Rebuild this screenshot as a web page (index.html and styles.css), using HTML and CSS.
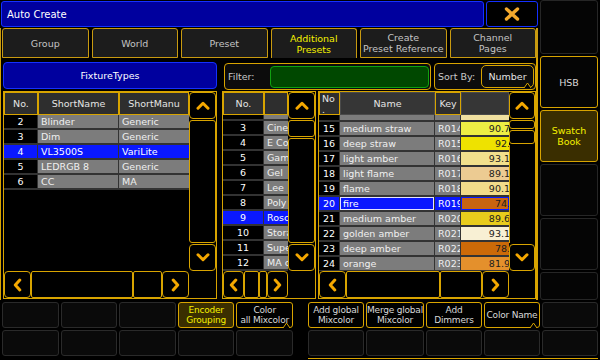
FILE: index.html
```html
<!DOCTYPE html>
<html>
<head>
<meta charset="utf-8">
<link rel="stylesheet" href="styles.css">
</head>
<body>
<div class="app">
  <div class="titlebar">
    <div class="title">Auto Create</div>
    <div class="close"><svg width="16" height="14" viewBox="0 0 16 14"><path d="M2.5 2 L13.5 12 M13.5 2 L2.5 12" stroke="#f4a92c" stroke-width="3.4" stroke-linecap="round"/></svg></div>
  </div>

  <div class="sidebar">
    <div class="scell top"></div>
    <div class="scell btn">HSB</div>
    <div class="scell btn on">Swatch<br>Book</div>
    <div class="scell"></div>
    <div class="scell"></div>
    <div class="scell last"></div>
  </div>

  <div class="tabs">
    <div class="tab">Group</div>
    <div class="tab">World</div>
    <div class="tab">Preset</div>
    <div class="tab act">Additional<br>Presets</div>
    <div class="tab">Create<br>Preset Reference</div>
    <div class="tab">Channel<br>Pages</div>
  </div>

  <div class="content">
    <div class="ftheader">FixtureTypes</div>
    <div class="filterrow">
      <div class="filter"><span>Filter:</span><div class="green"></div></div>
      <div class="sort"><span>Sort By:</span><div class="numbtn">Number<svg class="notch" width="7" height="6" viewBox="0 0 7 6"><path d="M0 6 L3.5 1 L7 6" fill="#000" stroke="#d8a400" stroke-width="1"/></svg></div></div>
    </div>

    <div class="panel pleft">
      <div class="tbl tl">
        <div class="thead"><div class="th">No.</div><div class="th">ShortName</div><div class="th">ShortManu</div></div>
        <div class="rows">
          <div class="tr"><div class="no">2</div><div>Blinder</div><div>Generic</div></div>
          <div class="tr"><div class="no">3</div><div>Dim</div><div>Generic</div></div>
          <div class="tr sel"><div class="no">4</div><div>VL3500S</div><div>VariLite</div></div>
          <div class="tr"><div class="no">5</div><div>LEDRGB 8</div><div>Generic</div></div>
          <div class="tr"><div class="no">6</div><div>CC</div><div>MA</div></div>
        </div>
      </div>
      <div class="vs">
        <div class="sb"><svg width="14" height="9" viewBox="0 0 14 9"><path d="M2 7.2 L7 2.3 L12 7.2" fill="none" stroke="#f5a800" stroke-width="3" stroke-linecap="round" stroke-linejoin="round"/></svg></div>
        <div class="trk"></div>
        <div class="sb"><svg width="14" height="9" viewBox="0 0 14 9"><path d="M2 1.8 L7 6.7 L12 1.8" fill="none" stroke="#f5a800" stroke-width="3" stroke-linecap="round" stroke-linejoin="round"/></svg></div>
      </div>
      <div class="hbar hl">
        <div class="ab"><svg width="9" height="14" viewBox="0 0 9 14"><path d="M6.8 2 L2.3 7 L6.8 12" fill="none" stroke="#f5a800" stroke-width="3" stroke-linecap="round" stroke-linejoin="round"/></svg></div>
        <div class="hs"></div>
        <div class="hs"></div>
        <div class="ab"><svg width="9" height="14" viewBox="0 0 9 14"><path d="M2.2 2 L6.7 7 L2.2 12" fill="none" stroke="#f5a800" stroke-width="3" stroke-linecap="round" stroke-linejoin="round"/></svg></div>
      </div>
      <div class="corner"></div>
    </div>

    <div class="panel pmid">
      <div class="tbl tm">
        <div class="thead"><div class="th">No.</div><div class="th"></div></div>
        <div class="rows off9">
          <div class="tr sliver"><div class="no"></div><div></div></div>
          <div class="tr"><div class="no">3</div><div>Cinegel</div></div>
          <div class="tr"><div class="no">4</div><div>E Colour</div></div>
          <div class="tr"><div class="no">5</div><div>GamColor</div></div>
          <div class="tr"><div class="no">6</div><div>Gel</div></div>
          <div class="tr"><div class="no">7</div><div>Lee</div></div>
          <div class="tr"><div class="no">8</div><div>Poly</div></div>
          <div class="tr sel"><div class="no">9</div><div>Rosco</div></div>
          <div class="tr"><div class="no">10</div><div>Storaro</div></div>
          <div class="tr"><div class="no">11</div><div>Supergel</div></div>
          <div class="tr"><div class="no">12</div><div>MA colors</div></div>
        </div>
      </div>
      <div class="vs">
        <div class="sb"><svg width="14" height="9" viewBox="0 0 14 9"><path d="M2 7.2 L7 2.3 L12 7.2" fill="none" stroke="#f5a800" stroke-width="3" stroke-linecap="round" stroke-linejoin="round"/></svg></div>
        <div class="seg s17"></div>
        <div class="trk"></div>
        <div class="sb"><svg width="14" height="9" viewBox="0 0 14 9"><path d="M2 1.8 L7 6.7 L12 1.8" fill="none" stroke="#f5a800" stroke-width="3" stroke-linecap="round" stroke-linejoin="round"/></svg></div>
      </div>
      <div class="hbar hm">
        <div class="ab"><svg width="9" height="14" viewBox="0 0 9 14"><path d="M6.8 2 L2.3 7 L6.8 12" fill="none" stroke="#f5a800" stroke-width="3" stroke-linecap="round" stroke-linejoin="round"/></svg></div>
        <div class="hs"></div>
        <div class="hs"></div>
        <div class="ab"><svg width="9" height="14" viewBox="0 0 9 14"><path d="M2.2 2 L6.7 7 L2.2 12" fill="none" stroke="#f5a800" stroke-width="3" stroke-linecap="round" stroke-linejoin="round"/></svg></div>
      </div>
      <div class="corner"></div>
    </div>

    <div class="panel pright">
      <div class="tbl tr4">
        <div class="thead"><div class="th no2">No<br>.</div><div class="th dk">Name</div><div class="th">Key</div><div class="th dk"></div></div>
        <div class="rows off8">
          <div class="tr sliver"><div class="no"></div><div></div><div></div><div class="col" style="background:#f0e0a0"></div></div>
          <div class="tr"><div class="no">15</div><div>medium straw</div><div>R014</div><div class="col" style="background:#eeee44"><span>90.7</span></div></div>
          <div class="tr"><div class="no">16</div><div>deep straw</div><div>R015</div><div class="col" style="background:#eee200"><span>92.</span></div></div>
          <div class="tr"><div class="no">17</div><div>light amber</div><div>R016</div><div class="col" style="background:#f2e08c"><span>93.1</span></div></div>
          <div class="tr"><div class="no">18</div><div>light flame</div><div>R017</div><div class="col" style="background:#eccb92"><span>89.1</span></div></div>
          <div class="tr"><div class="no">19</div><div>flame</div><div>R018</div><div class="col" style="background:#f2dc8a"><span>90.1</span></div></div>
          <div class="tr sel"><div class="no">20</div><div class="edit">fire</div><div>R019</div><div class="col" style="background:#c86410"><span>74.</span></div></div>
          <div class="tr"><div class="no">21</div><div>medium amber</div><div>R020</div><div class="col" style="background:#e8cc1c"><span>89.6</span></div></div>
          <div class="tr"><div class="no">22</div><div>golden amber</div><div>R021</div><div class="col" style="background:#f8f0d4"><span>93.1</span></div></div>
          <div class="tr"><div class="no">23</div><div>deep amber</div><div>R022</div><div class="col" style="background:#cc6a08"><span>78.</span></div></div>
          <div class="tr"><div class="no">24</div><div>orange</div><div>R023</div><div class="col" style="background:#e4902c"><span>81.9</span></div></div>
        </div>
      </div>
      <div class="vs">
        <div class="sb"><svg width="14" height="9" viewBox="0 0 14 9"><path d="M2 7.2 L7 2.3 L12 7.2" fill="none" stroke="#f5a800" stroke-width="3" stroke-linecap="round" stroke-linejoin="round"/></svg></div>
        <div class="seg s9"></div>
        <div class="seg s14"></div>
        <div class="fill"></div>
        <div class="sb"><svg width="14" height="9" viewBox="0 0 14 9"><path d="M2 1.8 L7 6.7 L12 1.8" fill="none" stroke="#f5a800" stroke-width="3" stroke-linecap="round" stroke-linejoin="round"/></svg></div>
      </div>
      <div class="hbar hr">
        <div class="ab"><svg width="9" height="14" viewBox="0 0 9 14"><path d="M6.8 2 L2.3 7 L6.8 12" fill="none" stroke="#f5a800" stroke-width="3" stroke-linecap="round" stroke-linejoin="round"/></svg></div>
        <div class="hs"></div>
        <div class="hs"></div>
        <div class="ab"><svg width="9" height="14" viewBox="0 0 9 14"><path d="M2.2 2 L6.7 7 L2.2 12" fill="none" stroke="#f5a800" stroke-width="3" stroke-linecap="round" stroke-linejoin="round"/></svg></div>
      </div>
      <div class="corner"></div>
    </div>
  </div>

  <div class="bottom">
    <div class="bg l">
      <div class="bb"></div>
      <div class="bb"></div>
      <div class="bb"></div>
      <div class="bb act on">Encoder<br>Grouping</div>
      <div class="bb act">Color<br>all Mixcolor<svg class="notch" width="7" height="6" viewBox="0 0 7 6"><path d="M0 6 L3.5 1 L7 6" fill="#000" stroke="#d8a400" stroke-width="1"/></svg></div>
      <div class="bb"></div>
      <div class="bb"></div>
      <div class="bb"></div>
      <div class="bb"></div>
      <div class="bb"></div>
    </div>
    <div class="bg r">
      <div class="bb act">Add global<br>Mixcolor</div>
      <div class="bb act">Merge global<br>Mixcolor</div>
      <div class="bb act">Add<br>Dimmers</div>
      <div class="bb act">Color Name<svg class="notch" width="7" height="6" viewBox="0 0 7 6"><path d="M0 6 L3.5 1 L7 6" fill="#000" stroke="#d8a400" stroke-width="1"/></svg></div>
      <div class="bb"></div>
      <div class="bb"></div>
      <div class="bb"></div>
      <div class="bb"></div>
      <div class="bb"></div>
      <div class="bb"></div>
    </div>
  </div>
</div>
</body>
</html>
```

FILE: styles.css
```css
* { box-sizing: border-box; margin: 0; padding: 0; }
html, body { width: 600px; height: 360px; overflow: hidden; background: #000; }
body { font-family: "DejaVu Sans", sans-serif; font-size: 9.5px; color: #d0d0d0; }

.app {
  display: grid;
  grid-template-columns: 538px 62px;
  grid-template-rows: 28px 30px 242px 60px;
  width: 600px;
  height: 360px;
}

/* title */
.titlebar { grid-column: 1; grid-row: 1; display: flex; gap: 2px; padding: 1px 0 1px 1px; }
.title {
  flex: 1; background: #00009e; border: 1px solid #1430ff; border-radius: 3px;
  color: #fff; font-size: 10px; display: flex; align-items: center; padding-left: 5px;
}
.close {
  width: 52px; background: #000; border: 1px solid #1430ff; border-radius: 3px;
  display: flex; align-items: center; justify-content: center;
}

/* sidebar */
.sidebar { grid-column: 2; grid-row: 1 / 4; display: flex; flex-direction: column; gap: 2px; padding: 0 2px; }
.scell {
  height: 52px; flex: none; background: #050505; border: 1px solid #262626; border-radius: 3px;
  display: flex; align-items: center; justify-content: center; text-align: center; line-height: 11px;
}
.scell.top { height: 54px; }
.scell.last { flex: 1; height: auto; }
.scell.btn { border-color: #d8a400; color: #d8d8d8; }
.scell.on { background: #3a2e00; color: #f4f000; }

/* tabs */
.tabs {
  grid-column: 1; grid-row: 2; display: grid; grid-template-columns: repeat(6, 1fr); gap: 3px;
  border-left: 1px solid #c89a10; border-right: 2px solid #c89a10; padding-left: 1px;
}
.tab {
  background: #1c1c1c; border: 1px solid #c89a10; border-radius: 3px 3px 0 0;
  display: flex; align-items: center; justify-content: center; text-align: center;
  line-height: 11px; color: #c4c4c4; white-space: nowrap;
}
.tab.act { color: #f4f000; border-bottom: none; }

/* content */
.content {
  grid-column: 1; grid-row: 3; display: grid;
  grid-template-columns: 214px 5px 94px 2px 218px;
  grid-template-rows: 28px 208px; row-gap: 1px;
  padding: 4px 0 1px 2px;
  border-left: 1px solid #d8a400; border-right: 2px solid #d8a400;
}
.ftheader {
  grid-column: 1; grid-row: 1; height: 27px; background: #00009e; border: 1px solid #1430ff; border-radius: 4px;
  color: #fff; display: flex; align-items: center; justify-content: center;
}
.filterrow { grid-column: 3 / 6; grid-row: 1; display: flex; gap: 3px; padding: 1px 0 0 2px; }
.filter, .sort {
  height: 27px; border: 1px solid #d8a400; border-radius: 4px; background: #0c0c0c;
  display: flex; align-items: center; padding-left: 3px; color: #c8c8c8;
}
.filter { width: 207px; }
.sort { flex: 1; }
.green { width: 159px; height: 22px; margin-left: auto; margin-right: 1px; background: #004800; border: 1px solid #10a010; border-radius: 4px; }
.numbtn {
  position: relative; width: 53px; height: 23px; margin-left: auto; margin-right: 1px;
  border: 1px solid #d8a400; border-radius: 5px; color: #e4e4e4;
  display: flex; align-items: center; justify-content: center;
}
.notch { position: absolute; right: 2px; bottom: -1px; }

/* panels */
.panel { grid-row: 2; border: 1px solid #d8a400; display: grid; grid-template-rows: 179px 27px; }
.pleft { grid-column: 1; grid-template-columns: 185px 27px; }
.pmid { grid-column: 3; grid-template-columns: 65px 27px; }
.pright { grid-column: 5; grid-template-columns: 190px 26px; }

.tbl { display: flex; flex-direction: column; overflow: hidden; }
.thead { display: grid; height: 23px; flex: none; }
.th {
  border: 1px solid #d8a400; background: #2e2e2e; color: #e4e4e4;
  display: flex; align-items: center; justify-content: center; overflow: hidden; white-space: nowrap;
}
.th.dk { border-color: #4a4a4a; background: #363636; }
.th.no2 { align-items: flex-start; justify-content: flex-start; padding: 0 0 0 2px; line-height: 11px; }
.rows { flex: 1; overflow: hidden; }
.off9 .tr:first-child { margin-top: -9px; }
.off8 .tr:first-child { margin-top: -8px; }
.tr { display: grid; height: 15px; gap: 1px; background: #333; padding-bottom: 2px; }
.tr > div {
  background: #7c7c7c; line-height: 13px; white-space: nowrap; overflow: hidden;
  padding-left: 3px; color: #f0f0f0;
}
.tr > .no { background: #000; color: #fff; text-align: center; padding: 0; }
.tr.sel > div { background: #0a18ff; color: #fff; }
.tr.sel > .edit { box-shadow: inset 0 0 0 1px #e4e4ff; }
.tr > .col { color: #202020; padding: 0; }
.col span { display: block; text-align: right; margin-right: -1px; }
.tr.sel > .col { box-shadow: inset 0 0 0 1px #0a18ff; color: #202020; }

.tl .thead { grid-template-columns: 34px 81px 1fr; }
.tl .tr { grid-template-columns: 33px 80px 1fr; }
.tm .thead { grid-template-columns: 41px 1fr; }
.tm .tr { grid-template-columns: 40px 1fr; }
.tr4 .thead { grid-template-columns: 21px 95px 26px 1fr; }
.tr4 .tr { grid-template-columns: 20px 94px 25px 1fr; }

/* vertical scroll */
.vs { display: flex; flex-direction: column; gap: 1px; }
.sb {
  height: 27px; flex: none; border: 1px solid #d8a400; border-radius: 4px; background: #000;
  display: flex; align-items: center; justify-content: center;
}
.trk { flex: 1; border: 1px solid #d8a400; border-radius: 3px; }
.seg { flex: none; border: 1px solid #d8a400; border-radius: 3px; }
.s17 { height: 17px; }
.s9 { height: 9px; }
.s14 { height: 14px; }
.fill { flex: 1; border-left: 1px solid #d8a400; }

/* horizontal bar */
.hbar { display: grid; grid-row: 2; grid-column: 1; }
.hl { grid-template-columns: 27px 102px 29px 27px; }
.hm { grid-template-columns: 21px 15px 8px 21px; }
.hr { grid-template-columns: 27px 94px 42px 27px; }
.ab { border: 1px solid #d8a400; border-radius: 4px; display: flex; align-items: center; justify-content: center; }
.hs { border: 1px solid #d8a400; border-radius: 2px; }
.corner { grid-row: 2; grid-column: 2; }

/* bottom */
.bottom { grid-column: 1 / 3; grid-row: 4; display: flex; align-items: flex-start; padding-top: 2px; }
.bg { display: grid; grid-template-columns: repeat(5, 1fr); grid-template-rows: 26px 26px; gap: 2px; }
.bg.l { width: 291px; margin-left: 2px; }
.bg.r { width: 290px; margin-left: 15px; padding-bottom: 2px; border-bottom: 1px solid #d8a400; }
.bb {
  position: relative; background: #0a0a0a; border: 1px solid #2a2a2a; border-radius: 3px;
  display: flex; align-items: center; justify-content: center; text-align: center;
  line-height: 10px; font-size: 9px; color: #d8d8d8; white-space: nowrap; letter-spacing: -0.2px;
}
.bb.act { border-color: #d8a400; background: #000; }
.bb.on { background: #3a2e00; color: #f4f000; }
```
